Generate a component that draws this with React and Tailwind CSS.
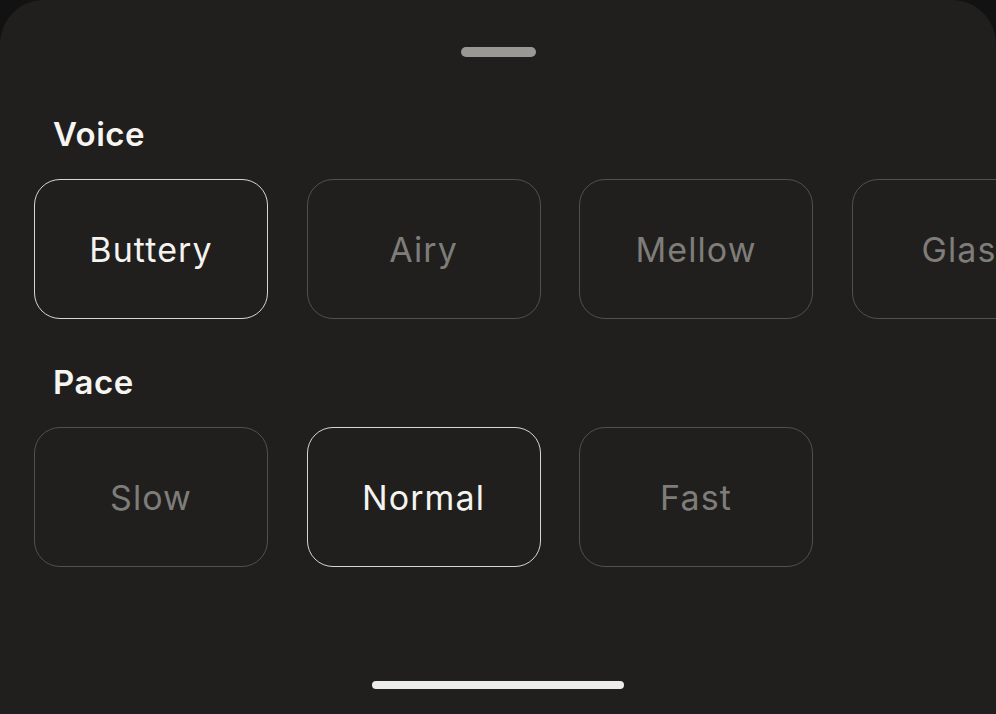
const voices = ['Buttery', 'Airy', 'Mellow', 'Glass']
const paces = ['Slow', 'Normal', 'Fast']

function Option({ label, active }) {
  return (
    <button
      className={`shrink-0 w-[234px] h-[140px] rounded-[26px] border flex items-center justify-center text-[34px] tracking-[1.1px] ${
        active ? 'border-[#d6d5d2] text-[#f4f3f0]' : 'border-[#52504d] text-[#7e7d7a]'
      }`}
    >
      {label}
    </button>
  )
}

function Group({ title, items, selected }) {
  return (
    <div>
      <h3 className="pl-[19px] text-[33px] leading-[40px] font-semibold text-[#f6f5f2] tracking-[0.5px]">{title}</h3>
      <div className="mt-[25px] flex gap-[38.5px] overflow-hidden">
        {items.map(item => (
          <Option key={item} label={item} active={item === selected} />
        ))}
      </div>
    </div>
  )
}

export default function App() {
  return (
    <div className="w-[996px] h-[714px] bg-[#121212] overflow-hidden" style={{ fontFamily: 'Inter, "Noto Sans", sans-serif' }}>
      <div className="h-full bg-[#201f1e] rounded-t-[44px] flex flex-col">
        <div className="pt-[47px] flex justify-center">
          <div className="w-[75px] h-[10px] rounded-full bg-[#9a9895]" />
        </div>
        <div className="pl-[34px] pt-[57px] flex flex-col gap-[43px]">
          <Group title="Voice" items={voices} selected="Buttery" />
          <Group title="Pace" items={paces} selected="Normal" />
        </div>
        <div className="mt-auto pb-[25px] flex justify-center">
          <div className="w-[252px] h-[8px] rounded-full bg-[#ececea]" />
        </div>
      </div>
    </div>
  )
}
